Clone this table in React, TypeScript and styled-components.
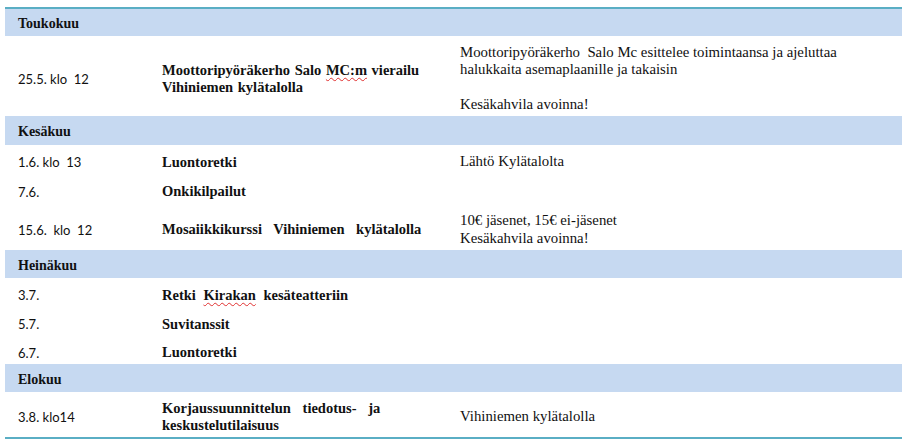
import React from "react";
import styled, { createGlobalStyle } from "styled-components";

const GlobalStyle = createGlobalStyle`
  html, body {
    margin: 0;
    padding: 0;
    background: #ffffff;
  }
`;

const Page = styled.div`
  padding: 7px 7px 0 5px;
  width: 909px;
  box-sizing: border-box;
`;

const Table = styled.table`
  width: 897px;
  border-collapse: collapse;
  table-layout: fixed;
  border-top: 2px solid #5aaec4;
  border-bottom: 2px solid #5aaec4;
  font-family: "Liberation Serif", "DejaVu Serif", serif;
  font-size: 14.8px;
  color: #111;
`;

const MonthRow = styled.tr<{ $h: number }>`
  background: #c6d9f1;
  height: ${(p) => p.$h}px;
`;

const MonthCell = styled.td`
  font-weight: bold;
  font-size: 14px;
  padding: 3px 13px 0;
  vertical-align: middle;
`;

const EventRow = styled.tr<{ $h: number }>`
  height: ${(p) => p.$h}px;
`;

const DateCell = styled.td`
  font-family: "Lato", "Open Sans", sans-serif;
  font-size: 13px;
  padding: 5px 13px 0;
  vertical-align: middle;
  white-space: pre;
`;

const TitleCell = styled.td<{ $ws: number }>`
  font-weight: bold;
  font-size: 14.5px;
  padding: 5px 13px 0;
  line-height: 17px;
  vertical-align: middle;
  word-spacing: ${(p) => p.$ws}px;
`;

const NoteCell = styled.td`
  padding: 5px 13px 0;
  line-height: 17.5px;
  vertical-align: middle;
`;

const Squiggle = styled.span`
  text-decoration: underline wavy #e03030;
  text-decoration-thickness: 1px;
  text-underline-offset: 2px;
`;

type Ev = {
  date: string;
  title: React.ReactNode;
  note?: React.ReactNode;
  h: number;
  ws?: number;
};

type Month = { name: string; h: number; events: Ev[] };

const months: Month[] = [
  {
    name: "Toukokuu",
    h: 28,
    events: [
      {
        date: "25.5. klo  12",
        title: (
          <>
            Moottoripyöräkerho Salo <Squiggle>MC:m</Squiggle> vierailu
            <br />
            Vihiniemen kylätalolla
          </>
        ),
        note: (
          <>
            Moottoripyöräkerho&nbsp; Salo Mc esittelee toimintaansa ja ajeluttaa
            <br />
            halukkaita asemaplaanille ja takaisin
            <br />
            <br />
            Kesäkahvila avoinna!
          </>
        ),
        h: 80,
        ws: 1,
      },
    ],
  },
  {
    name: "Kesäkuu",
    h: 29,
    events: [
      { date: "1.6. klo  13", title: "Luontoretki", note: "Lähtö Kylätalolta", h: 29 },
      { date: "7.6.", title: "Onkikilpailut", h: 30 },
      {
        date: "15.6.  klo  12",
        title: "Mosaiikkikurssi Vihiniemen kylätalolla",
        note: (
          <>
            10€ jäsenet, 15€ ei-jäsenet
            <br />
            Kesäkahvila avoinna!
          </>
        ),
        h: 46,
        ws: 8,
      },
    ],
  },
  {
    name: "Heinäkuu",
    h: 28,
    events: [
      {
        date: "3.7.",
        title: (
          <>
            Retki <Squiggle>Kirakan</Squiggle> kesäteatteriin
          </>
        ),
        h: 29,
        ws: 4,
      },
      { date: "5.7.", title: "Suvitanssit", h: 29 },
      { date: "6.7.", title: "Luontoretki", h: 28 },
    ],
  },
  {
    name: "Elokuu",
    h: 28,
    events: [
      {
        date: "3.8. klo14",
        title: (
          <>
            Korjaussuunnittelun tiedotus- ja
            <br />
            keskustelutilaisuus
          </>
        ),
        note: "Vihiniemen kylätalolla",
        h: 46,
        ws: 8,
      },
    ],
  },
];

export default function App() {
  return (
    <Page>
      <GlobalStyle />
      <Table>
        <colgroup>
          <col style={{ width: 144 }} />
          <col style={{ width: 298 }} />
          <col />
        </colgroup>
        <tbody>
          {months.map((m) => (
            <React.Fragment key={m.name}>
              <MonthRow $h={m.h}>
                <MonthCell colSpan={3}>{m.name}</MonthCell>
              </MonthRow>
              {m.events.map((ev, i) => (
                <EventRow key={i} $h={ev.h}>
                  <DateCell>{ev.date}</DateCell>
                  <TitleCell $ws={ev.ws ?? 3}>{ev.title}</TitleCell>
                  <NoteCell>{ev.note}</NoteCell>
                </EventRow>
              ))}
            </React.Fragment>
          ))}
        </tbody>
      </Table>
    </Page>
  );
}
